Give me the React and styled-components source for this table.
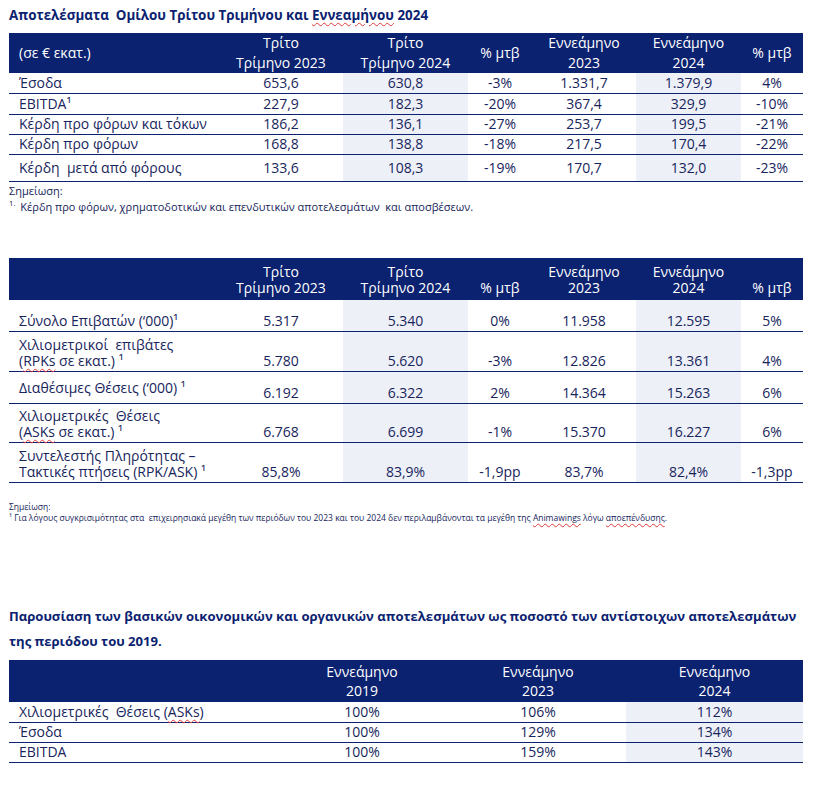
import React from 'react';
import styled, { createGlobalStyle } from 'styled-components';

const navy = '#0b2270';
const ink = '#17255c';
const shade = '#eef0f8';

const GlobalStyle = createGlobalStyle`
	body {
		margin: 0;
		background: #ffffff;
		font-family: 'Open Sans', 'Noto Sans', sans-serif;
		color: ${ink};
	}
`;

const Page = styled.div`
	width: 825px;
	padding: 0 0 40px 9px;
	box-sizing: border-box;
`;

const Title = styled.h2`
	margin: ${(p) => p.$top}px 0 0;
	width: 810px;
	font-size: ${(p) => p.$size}px;
	line-height: ${(p) => p.$lh}px;
	font-weight: 700;
	color: ${navy};
	white-space: nowrap;
`;

const Typo = styled.span`
	text-decoration: underline wavy #e23b3b;
	text-decoration-thickness: 1px;
	text-underline-offset: 2px;
`;

const Table = styled.table`
	width: 794px;
	border-collapse: collapse;
	table-layout: fixed;
	margin-top: ${(p) => p.$top}px;
	font-size: 14px;
`;

const HeadRow = styled.tr`
	height: ${(p) => p.$h}px;
	background: ${navy};
`;

const HeadCell = styled.th`
	color: #ffffff;
	font-weight: 400;
	font-size: 14px;
	line-height: ${(p) => p.$lh}px;
	text-align: ${(p) => (p.$left ? 'left' : 'center')};
	padding: 0 0 ${(p) => p.$pb || 0}px ${(p) => (p.$left ? 10 : 0)}px;
	vertical-align: ${(p) => p.$va || 'middle'};
	white-space: nowrap;
`;

const Row = styled.tr`
	height: ${(p) => p.$h}px;
`;

const Cell = styled.td`
	padding: 0 0 ${(p) => p.$pb || 0}px ${(p) => (p.$left ? 10 : 0)}px;
	text-align: ${(p) => (p.$left ? 'left' : 'center')};
	vertical-align: ${(p) => p.$va || 'middle'};
	line-height: ${(p) => p.$lh || 18}px;
	background: ${(p) => (p.$shade ? shade : 'transparent')};
	border-bottom: 1.5px solid ${navy};
	white-space: pre;
	color: ${ink};
`;

const Notes = styled.div`
	margin-top: ${(p) => p.$top}px;
	font-size: ${(p) => p.$size}px;
	line-height: ${(p) => p.$lh}px;
	color: ${ink};
`;

const NoteLine = styled.div`
	white-space: nowrap;
`;

const Sup = styled.sup`
	font-size: 0.7em;
	line-height: 0;
	margin-right: 2px;
`;

const quarterCols = [210, 124, 125, 64, 104, 105, 62];
const quarterShade = [false, false, true, false, false, true, false];

const results = [
	{ label: 'Έσοδα', h: 20, v: ['653,6', '630,8', '-3%', '1.331,7', '1.379,9', '4%'] },
	{ label: 'EBITDA¹', h: 21, v: ['227,9', '182,3', '-20%', '367,4', '329,9', '-10%'] },
	{ label: 'Κέρδη προ φόρων και τόκων', h: 20, v: ['186,2', '136,1', '-27%', '253,7', '199,5', '-21%'] },
	{ label: 'Κέρδη προ φόρων', h: 20, v: ['168,8', '138,8', '-18%', '217,5', '170,4', '-22%'] },
	{ label: 'Κέρδη  μετά από φόρους', h: 27, v: ['133,6', '108,3', '-19%', '170,7', '132,0', '-23%'] },
];

const traffic = [
	{ label: ['Σύνολο Επιβατών (‘000)¹'], h: 32, va: 'bottom', v: ['5.317', '5.340', '0%', '11.958', '12.595', '5%'] },
	{
		label: ['Χιλιομετρικοί  επιβάτες', <>(<Typo>RPKs</Typo> σε εκατ.) ¹</>],
		h: 40,
		va: 'bottom',
		v: ['5.780', '5.620', '-3%', '12.826', '13.361', '4%'],
	},
	{ label: ['Διαθέσιμες Θέσεις (‘000) ¹'], h: 32, va: 'middle', v: ['6.192', '6.322', '2%', '14.364', '15.263', '6%'] },
	{
		label: ['Χιλιομετρικές  Θέσεις', <>(<Typo>ASKs</Typo> σε εκατ.) ¹</>],
		h: 39,
		va: 'bottom',
		v: ['6.768', '6.699', '-1%', '15.370', '16.227', '6%'],
	},
	{
		label: ['Συντελεστής Πληρότητας –', 'Τακτικές πτήσεις (RPK/ASK) ¹'],
		h: 40,
		va: 'bottom',
		v: ['85,8%', '83,9%', '-1,9pp', '83,7%', '82,4%', '-1,3pp'],
	},
];

const compareCols = [265, 176, 176, 177];
const compare = [
	{ label: <>Χιλιομετρικές  Θέσεις (<Typo>ASKs</Typo>)</>, v: ['100%', '106%', '112%'] },
	{ label: 'Έσοδα', v: ['100%', '129%', '134%'] },
	{ label: 'EBITDA', v: ['100%', '159%', '143%'] },
];

const Cols = ({ widths }) => (
	<colgroup>
		{widths.map((w, i) => (
			<col key={i} style={{ width: w }} />
		))}
	</colgroup>
);

const App = () => {
	return (
		<Page>
			<GlobalStyle />
			<Title $top={6} $size={13.4} $lh={18}>
				Αποτελέσματα&nbsp; Ομίλου Τρίτου Τριμήνου και <Typo>Εννεαμήνου</Typo> 2024
			</Title>

			<Table $top={9}>
				<Cols widths={quarterCols} />
				<thead>
					<HeadRow $h={40}>
						<HeadCell $left $lh={20}>(σε € εκατ.)</HeadCell>
						<HeadCell $lh={20}>Τρίτο<br />Τρίμηνο 2023</HeadCell>
						<HeadCell $lh={20}>Τρίτο<br />Τρίμηνο 2024</HeadCell>
						<HeadCell $lh={20}>% μτβ</HeadCell>
						<HeadCell $lh={20}>Εννεάμηνο<br />2023</HeadCell>
						<HeadCell $lh={20}>Εννεάμηνο<br />2024</HeadCell>
						<HeadCell $lh={20}>% μτβ</HeadCell>
					</HeadRow>
				</thead>
				<tbody>
					{results.map((r) => (
						<Row key={r.label} $h={r.h}>
							<Cell $left>{r.label}</Cell>
							{r.v.map((v, i) => (
								<Cell key={i} $shade={quarterShade[i + 1]}>{v}</Cell>
							))}
						</Row>
					))}
				</tbody>
			</Table>
			<Notes $top={1} $size={11} $lh={16}>
				<NoteLine>Σημείωση:</NoteLine>
				<NoteLine>
					<Sup>1.</Sup> Κέρδη προ φόρων, χρηματοδοτικών και επενδυτικών αποτελεσμάτων&nbsp; και αποσβέσεων.
				</NoteLine>
			</Notes>

			<Table $top={43}>
				<Cols widths={quarterCols} />
				<thead>
					<HeadRow $h={42}>
						<HeadCell $left $lh={16} $va="bottom" $pb={4}></HeadCell>
						<HeadCell $lh={16} $va="bottom" $pb={4}>Τρίτο<br />Τρίμηνο 2023</HeadCell>
						<HeadCell $lh={16} $va="bottom" $pb={4}>Τρίτο<br />Τρίμηνο 2024</HeadCell>
						<HeadCell $lh={16} $va="bottom" $pb={4}>% μτβ</HeadCell>
						<HeadCell $lh={16} $va="bottom" $pb={4}>Εννεάμηνο<br />2023</HeadCell>
						<HeadCell $lh={16} $va="bottom" $pb={4}>Εννεάμηνο<br />2024</HeadCell>
						<HeadCell $lh={16} $va="bottom" $pb={4}>% μτβ</HeadCell>
					</HeadRow>
				</thead>
				<tbody>
					{traffic.map((r, n) => (
						<Row key={n} $h={r.h}>
							<Cell $left $lh={16} $va={r.va} $pb={r.va === 'bottom' ? 2 : 0}>
								{r.label.map((l, k) => (
									<div key={k}>{l}</div>
								))}
							</Cell>
							{r.v.map((v, i) => (
								<Cell key={i} $lh={16} $va="bottom" $pb={2} $shade={quarterShade[i + 1]}>
									{v}
								</Cell>
							))}
						</Row>
					))}
				</tbody>
			</Table>
			<Notes $top={18} $size={8.5} $lh={11}>
				<NoteLine>Σημείωση:</NoteLine>
				<NoteLine>
					¹ Για λόγους συγκρισιμότητας στα&nbsp; επιχειρησιακά μεγέθη των περιόδων του 2023 και του 2024 δεν
					περιλαμβάνονται τα μεγέθη της <Typo>Animawings</Typo> λόγω <Typo>αποεπένδυσης</Typo>.
				</NoteLine>
			</Notes>

			<Title $top={81} $size={13.1} $lh={25}>
				Παρουσίαση των βασικών οικονομικών και οργανικών αποτελεσμάτων ως ποσοστό των αντίστοιχων αποτελεσμάτων
				<br />
				της περιόδου του 2019.
			</Title>

			<Table $top={6}>
				<Cols widths={compareCols} />
				<thead>
					<HeadRow $h={42}>
						<HeadCell $left $lh={19}></HeadCell>
						<HeadCell $lh={19}>Εννεάμηνο<br />2019</HeadCell>
						<HeadCell $lh={19}>Εννεάμηνο<br />2023</HeadCell>
						<HeadCell $lh={19}>Εννεάμηνο<br />2024</HeadCell>
					</HeadRow>
				</thead>
				<tbody>
					{compare.map((r, n) => (
						<Row key={n} $h={20}>
							<Cell $left>{r.label}</Cell>
							{r.v.map((v, i) => (
								<Cell key={i} $shade={i === 2}>{v}</Cell>
							))}
						</Row>
					))}
				</tbody>
			</Table>
		</Page>
	);
};

export default App;
